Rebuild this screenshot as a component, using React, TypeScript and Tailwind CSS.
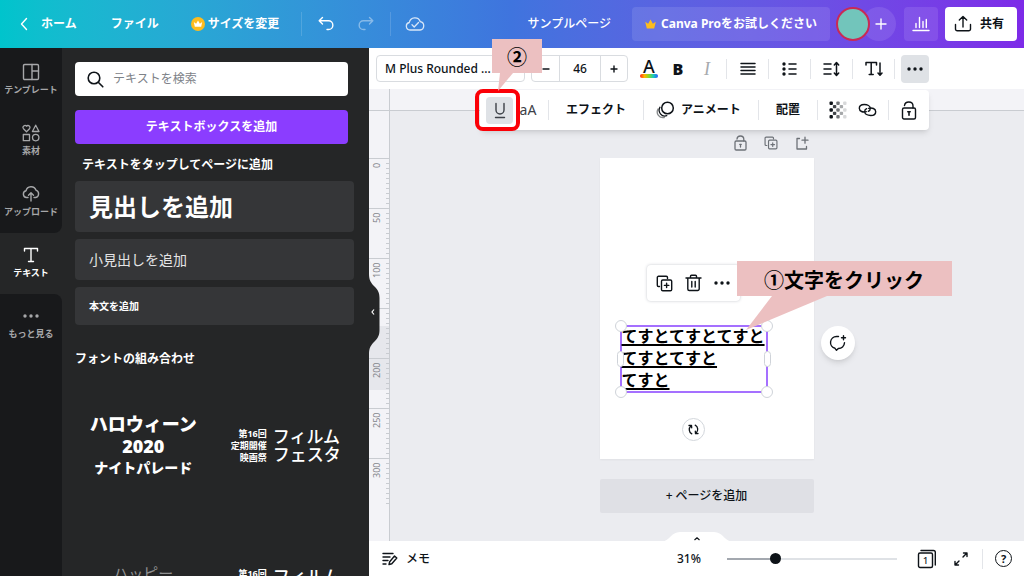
import type { ReactNode } from "react";

type GlyphProps = { w: number; h: number; sw?: number; className?: string; children: ReactNode };

function Glyph({ w, h, sw = 1.4, className = "", children }: GlyphProps) {
  return (
    <svg
      width={w}
      height={h}
      viewBox={`0 0 ${w} ${h}`}
      fill="none"
      stroke="currentColor"
      strokeWidth={sw}
      strokeLinecap="round"
      strokeLinejoin="round"
      aria-hidden="true"
      className={"shrink-0 " + className}
    >
      {children}
    </svg>
  );
}

function LockGlyph() {
  return (
    <Glyph w={16} h={19}>
      <rect x="1.500" y="7" width="13" height="11" rx="1.500" />
      <path d="M3.500 4.500C3.800 2.300 5.500 1 7.800 1c2.500 0 4.200 1.600 4.200 4v2" />
      <path d="M8 10.800v3.400M6.800 10.800h2.400" strokeWidth="1.600" />
    </Glyph>
  );
}

function SmallLockGlyph() {
  return (
    <Glyph w={13} h={16} sw={1.300}>
      <rect x="1" y="6" width="11" height="9" rx="1.200" />
      <path d="M3 4C3.200 2 4.600 1 6.400 1 8.500 1 9.800 2.400 9.800 4.300V6M6.500 9.300v2.700M5.700 9.300h1.600" />
    </Glyph>
  );
}

function CopyGlyph({ size = 17 }: { size?: number }) {
  return (
    <svg
      width={size}
      height={size}
      viewBox="0 0 17 17"
      fill="none"
      stroke="currentColor"
      strokeWidth="1.400"
      strokeLinecap="round"
      strokeLinejoin="round"
      aria-hidden="true"
    >
      <path d="M3.500 11.500h-1a1.200 1.200 0 0 1-1.200-1.200V2.500A1.200 1.200 0 0 1 2.500 1.300h7.800A1.200 1.200 0 0 1 11.500 2.500v1" />
      <rect x="5.500" y="5" width="10.200" height="10.700" rx="1.300" />
      <path d="M10.600 8.200v4.400M8.400 10.400h4.400" />
    </svg>
  );
}

function Dots({ size = 16 }: { size?: number }) {
  return (
    <svg width={size} height="4" viewBox="0 0 16 4" fill="currentColor" aria-hidden="true">
      <circle cx="2" cy="2" r="1.700" />
      <circle cx="8" cy="2" r="1.700" />
      <circle cx="14" cy="2" r="1.700" />
    </svg>
  );
}

function Divider() {
  return <span className="block h-5 w-px shrink-0 bg-[#e3e5e9]" />;
}

function Header() {
  return (
    <header className="flex h-12 shrink-0 items-center bg-linear-to-r from-[#00c4cc] via-[#3f74de] to-[#7d2ae8] pr-[7px] pl-5 text-xs font-bold whitespace-nowrap text-white">
      <a href="#home" className="flex items-center gap-[13px]">
        <Glyph w={8} h={14}>
          <path d="M6.500 1.500 1.500 7l5 5.500" />
        </Glyph>
        ホーム
      </a>
      <button type="button" className="ml-[34px]">ファイル</button>
      <button type="button" className="ml-8 flex items-center gap-[3px]">
        <svg width="14" height="14" viewBox="0 0 14 14" aria-hidden="true">
          <circle cx="7" cy="7" r="7" fill="#fdbc1e" />
          <path d="M3.800 9.800 2.800 5l2.300 1.700L7 3.400l1.900 3.300L11.200 5l-1 4.800z" fill="#fff" />
        </svg>
        サイズを変更
      </button>
      <span className="ml-[22px] h-6 w-px bg-white/15" />
      <button type="button" aria-label="元に戻す" className="ml-4">
        <Glyph w={16} h={16}>
          <path d="M4.500 1.500 1.200 4.800l3.300 3.300M1.500 4.800h9a4.300 4.300 0 0 1 0 8.700H9" />
        </Glyph>
      </button>
      <button type="button" aria-label="やり直す" className="ml-6 opacity-40">
        <Glyph w={16} h={16}>
          <path d="m11.500 1.500 3.300 3.300-3.300 3.300M14.500 4.800h-9a4.300 4.300 0 0 0 0 8.700H7" />
        </Glyph>
      </button>
      <span className="ml-4 h-6 w-px bg-white/15" />
      <Glyph w={20} h={16} sw={1.300} className="ml-[14px] opacity-80">
        <path d="M5 14a3.800 3.800 0 0 1-.7-7.500A5.700 5.700 0 0 1 15.300 5.700 4.200 4.200 0 0 1 15 14z" />
        <path d="m7 8.800 2.200 2.200 4.300-4.500" />
      </Glyph>
      <div className="ml-auto flex items-center">
        <span className="mr-[21px] font-medium">サンプルページ</span>
        <button type="button" className="flex h-[34px] w-[198px] items-center justify-center gap-[5px] rounded bg-white/10">
          <svg width="11" height="10" viewBox="0 0 11 10" fill="#fdbc1e" aria-hidden="true">
            <path d="M1.800 9.500.2 2.800l2.900 2L5.500.5l2.400 4.300 2.900-2-1.600 6.700z" />
          </svg>
          Canva Proをお試しください
        </button>
        <span className="z-10 ml-[6px] size-[34px] rounded-full border-2 border-[#c92a55] bg-[#72c5bb]" />
        <button type="button" aria-label="メンバーを追加" className="-ml-2 flex size-[34px] items-center justify-center rounded-full bg-white/10 pl-1">
          <Glyph w={12} h={12}>
            <path d="M6 1v10M1 6h10" />
          </Glyph>
        </button>
        <button type="button" aria-label="インサイト" className="ml-2 flex size-[34px] items-center justify-center rounded bg-white/10">
          <Glyph w={18} h={16}>
            <path d="M1 14.500h16M4 11.500v-4M7.500 11.500V1.500M11 11.500v-6M14.300 11.500v-8" />
          </Glyph>
        </button>
        <button type="button" className="ml-[7px] flex h-[34px] w-[72px] items-center justify-center gap-2 rounded bg-white pr-1 text-[#0e1318]">
          <Glyph w={18} h={18}>
            <path d="M9 12V1.800M5.300 5 9 1.500 12.700 5M1.500 9.500V14A1.800 1.800 0 0 0 3.300 15.800h11.400a1.800 1.800 0 0 0 1.800-1.800V9.500" />
          </Glyph>
          共有
        </button>
      </div>
    </header>
  );
}

const railItems: { label: string; icon: ReactNode }[] = [
  {
    label: "テンプレート",
    icon: (
      <Glyph w={18} h={18}>
        <rect x="1.500" y="1.500" width="15" height="15" rx="1.200" />
        <path d="M10 1.500v15M10 8h6.500" />
      </Glyph>
    ),
  },
  {
    label: "素材",
    icon: (
      <Glyph w={18} h={18} sw={1.300}>
        <path d="M4.500 7.700 1.500 4.700A1.900 1.900 0 0 1 4.500 2.200a1.900 1.900 0 0 1 3 2.500z" />
        <path d="M13.700 1.200 17 7.500h-6.600z" />
        <rect x="1.300" y="10.500" width="6.200" height="6.200" />
        <circle cx="13.700" cy="13.600" r="3.200" />
      </Glyph>
    ),
  },
  {
    label: "アップロード",
    icon: (
      <Glyph w={18} h={18}>
        <path d="M6 12.500H4.500a3.400 3.400 0 0 1-.5-6.700A5.200 5.200 0 0 1 14 5.200a3.800 3.800 0 0 1-.3 7.300H12M9 16V8M6.500 10.300 9 7.800l2.500 2.500" />
      </Glyph>
    ),
  },
  {
    label: "テキスト",
    icon: (
      <Glyph w={18} h={18}>
        <path d="M2.500 5V2.500h13V5M9 2.500v13M6.500 15.500h5" />
      </Glyph>
    ),
  },
  { label: "もっと見る", icon: <Dots /> },
];

const railShape = ["bg-[#18191b] pt-[2px]", "bg-[#18191b]", "rounded-br-lg bg-[#18191b]", "", "flex-1 rounded-tr-lg bg-[#18191b]"];

function Rail() {
  return (
    <nav className="w-[62px] shrink-0 bg-[#252627]">
      <ul className="flex h-full flex-col">
        {railItems.map((item, i) => (
          <li key={item.label} className={`${railShape[i]} ${i === 3 ? "text-white" : "text-[#a6a7a9]"}`}>
            <button type="button" className="flex h-[61px] w-full flex-col items-center pt-3 text-[9px] leading-4 font-bold whitespace-nowrap">
              <span className="flex h-5 items-center">{item.icon}</span>
              {item.label}
            </button>
          </li>
        ))}
      </ul>
    </nav>
  );
}

function FontPair() {
  return (
    <div className="flex items-center justify-center gap-[6px] whitespace-nowrap text-white">
      <div className="text-right text-[9px] leading-3 font-bold">
        <p>第16回</p>
        <p>定期開催</p>
        <p>映画祭</p>
      </div>
      <div className="text-[17px] leading-[18px] font-medium">
        <p>フィルム</p>
        <p>フェスタ</p>
      </div>
    </div>
  );
}

function TextPanel() {
  return (
    <aside className="relative w-[307px] shrink-0 bg-[#252627] text-white">
      <div className="flex h-full flex-col overflow-hidden pr-[15px] pl-[13px]">
        <div className="mt-[14px] mr-[6px] flex h-[34px] shrink-0 items-center gap-[9px] rounded bg-white px-3 text-[#0e1318]">
          <Glyph w={17} h={17} sw={1.600}>
            <circle cx="7" cy="7" r="5.800" />
            <path d="m11.500 11.500 4.300 4.300" />
          </Glyph>
          <input
            type="text"
            aria-label="テキストを検索"
            placeholder="テキストを検索"
            className="min-w-0 flex-1 bg-transparent text-xs outline-none placeholder:text-[#7d8288]"
          />
        </div>
        <button type="button" className="mt-[14px] mr-[6px] h-[34px] shrink-0 rounded bg-[#8b3dff] text-xs font-bold">
          テキストボックスを追加
        </button>
        <h2 className="mt-[13px] pl-[7px] text-xs leading-4 font-bold">テキストをタップしてページに追加</h2>
        <button type="button" className="mt-2 h-[51px] shrink-0 rounded bg-[#353638] pl-[14px] text-left text-2xl font-bold">
          見出しを追加
        </button>
        <button type="button" className="mt-[7px] h-[41px] shrink-0 rounded bg-[#353638] pl-[14px] text-left text-sm text-[#e4e4e5]">
          小見出しを追加
        </button>
        <button type="button" className="mt-[7px] h-[38px] shrink-0 rounded bg-[#353638] pl-[14px] text-left text-[10px] font-bold">
          本文を追加
        </button>
        <h2 className="mt-[26px] text-xs leading-4 font-bold">フォントの組み合わせ</h2>
        <div className="mt-2 grid grid-cols-2 gap-x-[6px]">
          <div className="flex h-[142px] flex-col items-center justify-center font-black whitespace-nowrap">
            <span className="text-lg leading-6">ハロウィーン</span>
            <span className="text-lg leading-5">2020</span>
            <span className="text-sm leading-6">ナイトパレード</span>
          </div>
          <div className="flex h-[142px] items-center justify-center">
            <FontPair />
          </div>
          <div className="mt-11 flex h-[142px] items-start justify-center text-[15px] leading-6 text-[#8f9091]">ハッピー</div>
          <div className="mt-[51px] flex h-[142px] items-start justify-center">
            <FontPair />
          </div>
        </div>
      </div>
      <button type="button" aria-label="パネルを閉じる" className="absolute top-[226px] left-full z-10 flex h-[80px] w-[11px] items-center">
        <svg width="11" height="80" viewBox="0 0 11 80" aria-hidden="true">
          <path d="M0 0c0 6 2 9 5.500 12.500S10.500 19 10.500 24v32c0 5-1.500 8-5 11.500S0 74 0 80z" fill="#252627" />
          <path d="m5 35.500-2 2.500 2 2.500" fill="none" stroke="#fff" strokeWidth="1.200" />
        </svg>
      </button>
    </aside>
  );
}

const cell = "flex h-7 shrink-0 items-center justify-center";

function FormatBar() {
  return (
    <div className="flex h-[41px] shrink-0 items-center bg-white pl-[7px] whitespace-nowrap text-[#0e1318]">
      <select
        aria-label="フォント"
        className="h-[27px] w-[149px] shrink-0 appearance-none rounded border border-[#d9dce0] bg-white px-2 text-xs font-medium"
      >
        <option>M Plus Rounded ...</option>
      </select>
      <div className="ml-[6px] flex h-[27px] w-[97px] shrink-0 items-center rounded border border-[#d9dce0] text-xs font-medium">
        <button type="button" aria-label="文字を小さく" className="flex h-full w-[27px] items-center justify-center">
          <Glyph w={8} h={8}>
            <path d="M1 4h6" />
          </Glyph>
        </button>
        <input
          type="text"
          aria-label="フォントサイズ"
          defaultValue="46"
          className="h-full min-w-0 flex-1 border-x border-[#d9dce0] text-center outline-none"
        />
        <button type="button" aria-label="文字を大きく" className="flex h-full w-[26px] items-center justify-center">
          <Glyph w={8} h={8}>
            <path d="M1 4h6M4 1v6" />
          </Glyph>
        </button>
      </div>
      <button type="button" aria-label="文字の色" className="ml-3 flex w-[18px] shrink-0 flex-col items-center">
        <span className="text-lg leading-[15px] font-medium">A</span>
        <span className="h-1 w-full rounded-full bg-[linear-gradient(to_right,#ff2a1a,#ffb400,#7fdc2b,#19c7c1,#2a5bff)]" />
      </button>
      <button type="button" className="ml-[10px] w-5 shrink-0 text-base font-black">B</button>
      <button type="button" className="ml-[9px] w-5 shrink-0 font-['Liberation_Serif',serif] text-lg text-[#a7aaae] italic">I</button>
      <span className="ml-[9px] flex shrink-0 items-center">
        <Divider />
        <button type="button" aria-label="文字揃え" className={`${cell} w-[41px]`}>
          <Glyph w={16} h={14} sw={1.500}>
            <path d="M1 1.500h14M1 5h14M1 8.500h14M1 12h14" />
          </Glyph>
        </button>
        <Divider />
        <button type="button" aria-label="箇条書き" className={`${cell} w-[41px]`}>
          <Glyph w={15} h={14} sw={1.500}>
            <path d="M7 2h7M7 7h7M7 12h7" />
            <path d="M2 2h.01M2 7h.01M2 12h.01" strokeWidth="3.400" />
          </Glyph>
        </button>
        <Divider />
        <button type="button" aria-label="行間隔" className={`${cell} w-[41px]`}>
          <Glyph w={17} h={16} sw={1.500}>
            <path d="M1 3h7M1 8h7M1 13h7M13.500 2v12M11.300 4l2.200-2.500L15.700 4M11.300 12l2.200 2.500 2.200-2.500" />
          </Glyph>
        </button>
        <Divider />
        <button type="button" aria-label="縦書き" className={`${cell} w-[41px]`}>
          <Glyph w={18} h={16} sw={1.500}>
            <path d="M1 4V1.500h10.500V4M6.200 1.500v12M4.200 13.500h4M15 2v12M13 12l2 2.300 2-2.300" />
          </Glyph>
        </button>
        <Divider />
      </span>
      <button type="button" aria-label="もっと見る" className={`${cell} ml-[6px] w-7 rounded bg-[#dfe2e6]`}>
        <Dots />
      </button>
    </div>
  );
}

const checkerCells = Array.from({ length: 25 }, (_, i) => ({ x: i % 5, y: Math.floor(i / 5) })).filter((c) => (c.x + c.y) % 2 === 0);

function MoreMenu() {
  return (
    <div className="absolute top-[42px] right-[95px] z-20 flex h-10 items-center rounded bg-white pr-3 pl-[6px] text-xs font-bold whitespace-nowrap text-[#0e1318] shadow-md">
      <div className="relative">
        <button type="button" aria-label="下線" className="flex size-[27px] items-center justify-center rounded bg-[#dfe2e6] text-[#3c4147]">
          <Glyph w={14} h={17}>
            <path d="M3 1.500V8a4 4 0 0 0 8 0V1.500M2.500 15.500h9" />
          </Glyph>
        </button>
        <span className="pointer-events-none absolute -top-2 -left-[11px] z-10 h-[42px] w-[45px] rounded-lg border-4 border-[#fb0007]" />
        <Callout2 />
      </div>
      <button type="button" className="ml-[5px] w-5 text-sm font-normal text-[#3c4147]">aA</button>
      <span className="ml-[10px]"><Divider /></span>
      <button type="button" className="w-[94px]">エフェクト</button>
      <Divider />
      <button type="button" className="flex w-[114px] items-center gap-[6px] pl-3">
        <Glyph w={19} h={18} sw={1.300}>
          <circle cx="11.500" cy="7" r="5.800" strokeWidth="1.500" />
          <path d="M4 6.200a5.800 5.800 0 0 0 6.800 8.500" />
          <path d="M2 8a5.800 5.800 0 0 0 6.300 8.500" opacity=".5" />
        </Glyph>
        アニメート
      </button>
      <Divider />
      <button type="button" className="w-[58px]">配置</button>
      <Divider />
      <button type="button" aria-label="透明度" className="ml-[11px]">
        <svg width="18" height="18" viewBox="0 0 18 18" aria-hidden="true">
          {checkerCells.map((c) => (
            <rect key={`${c.x}-${c.y}`} x={0.5 + c.x * 3.4} y={0.5 + c.y * 3.4} width="3.400" height="3.400" rx="1" fill="#0e1318" opacity={1 - c.x * 0.21} />
          ))}
        </svg>
      </button>
      <button type="button" aria-label="リンク" className="ml-[11px]">
        <Glyph w={19} h={14} sw={1.400}>
          <path d="M8.300 8.700C5 9.700 1.300 8.300 1.300 5.300c0-2.500 2.300-3.800 5-3.800 3 0 6 1.400 6 4 0 1.300-.8 2.300-2 2.800" />
          <path d="M10.700 5.300c3.300-1 7 .4 7 3.400 0 2.500-2.300 3.800-5 3.800-3 0-6-1.400-6-4 0-1.300.8-2.300 2-2.800" />
        </Glyph>
      </button>
      <span className="ml-[11px]"><Divider /></span>
      <button type="button" aria-label="ロック" className="ml-3">
        <LockGlyph />
      </button>
    </div>
  );
}

function Callout2() {
  return (
    <div className="absolute -top-[58px] left-[6px] z-20 w-[50px]">
      <p className="flex h-[34px] items-center justify-center bg-[#ecc0c1] pt-1 text-xl font-bold text-black">②</p>
      <svg width="24" height="18" viewBox="0 0 24 18" className="block" aria-hidden="true">
        <path d="M8 0h13L6 18z" fill="#ecc0c1" />
      </svg>
    </div>
  );
}

function Callout1() {
  return (
    <div className="absolute top-[103px] left-[137px] z-20 w-[215px]">
      <p className="flex h-[35px] items-center justify-center bg-[#ecc0c1] pt-1 text-xl font-bold whitespace-nowrap text-black">①文字をクリック</p>
      <svg width="92" height="35" viewBox="0 0 92 35" className="block" aria-hidden="true">
        <path d="M35 0h55L9 34z" fill="#ecc0c1" />
      </svg>
    </div>
  );
}

const rulerMarks = ["0", "50", "100", "", "200", "250", "300"];

function SideRuler() {
  return (
    <div className="relative w-[21px] shrink-0 overflow-hidden border-r border-[#c9ccd1] bg-[#f3f3f7] pt-[47px] text-[#83868b]">
      <span className="absolute top-[215px] left-0 h-[64px] w-full bg-[#e6e7ec]" />
      {rulerMarks.map((mark, i) => (
        <div key={i} className="relative flex h-[50px] justify-between border-t border-[#c9ccd1]">
          <span className="rotate-180 pb-1 text-right text-[9px] leading-4 [writing-mode:vertical-rl]">{mark}</span>
          <span className="w-[3px] bg-[repeating-linear-gradient(to_bottom,transparent_0_4px,#c9ccd1_4px_5px)]" />
        </div>
      ))}
    </div>
  );
}

const handles = [
  "-top-[7px] -left-[7px] size-3",
  "-top-[7px] -right-[7px] size-3",
  "-bottom-[7px] -left-[7px] size-3",
  "-bottom-[7px] -right-[7px] size-3",
  "top-6 -left-[5px] h-4 w-[7px]",
  "top-6 -right-[5px] h-4 w-[7px]",
];

function Page() {
  return (
    <div className="relative h-[301px] w-[214px] bg-white shadow-xs">
      <div className="absolute top-[107px] left-[47px] flex h-[36px] w-[93px] items-center gap-3 rounded bg-white pl-[9px] text-[#0e1318] shadow-[0_0_3px_rgba(60,70,90,0.300)]">
        <button type="button" aria-label="複製"><CopyGlyph /></button>
        <button type="button" aria-label="削除">
          <Glyph w={17} h={18}>
            <path d="M1 4h15M5.500 4V2.200a1 1 0 0 1 1-1h4a1 1 0 0 1 1 1V4M2.800 4v11a1.500 1.500 0 0 0 1.500 1.500h8.400a1.500 1.500 0 0 0 1.500-1.500V4M6.800 7.500v5.500M10.200 7.500v5.500" />
          </Glyph>
        </button>
        <button type="button" aria-label="その他"><Dots /></button>
      </div>
      <div className="absolute top-[167px] left-5 w-[148px] border-2 border-[#a570ff]">
        <p className="-mt-[2px] h-[66px] text-base leading-[22px] font-bold whitespace-nowrap text-black underline decoration-2 underline-offset-2">
          <span className="block">てすとてすとてすと</span>
          <span className="block">てすとてすと</span>
          <span className="block">てすと</span>
        </p>
        {handles.map((pos) => (
          <span key={pos} className={`absolute rounded-full border border-[#cfd3d9] bg-white ${pos}`} />
        ))}
      </div>
      <button type="button" aria-label="回転" className="absolute top-[260px] left-[82px] flex size-[23px] items-center justify-center rounded-full border border-[#d3d7dc] bg-white text-[#0e1318]">
        <Glyph w={13} h={13} sw={1.300}>
          <path d="M4.800 10.800A4.700 4.700 0 0 1 4 3M2 2.500l2.500-.2.200 2.500M8.200 2.200A4.700 4.700 0 0 1 9 10M11 10.500l-2.500.2-.2-2.500" />
        </Glyph>
      </button>
      <button type="button" aria-label="コメントを追加" className="absolute top-[168px] left-[221px] flex size-[34px] items-center justify-center rounded-full bg-white text-[#0e1318] shadow-md">
        <Glyph w={19} h={18}>
          <path d="M10.500 2.500H8.500a6 6 0 0 0-1.500 11.800l1.500 2 1.800-1.800a6 6 0 0 0 6.200-5.700M15.500 1.700v4M13.500 3.700h4" />
        </Glyph>
      </button>
      <Callout1 />
    </div>
  );
}

function Canvas() {
  return (
    <div className="flex min-h-0 flex-1 flex-col bg-[#ebecf0]">
      <div className="flex h-[22px] shrink-0 border-b border-[#c9ccd1] bg-[#f3f3f7]">
        <span className="w-[21px] border-r border-[#c9ccd1]" />
      </div>
      <div className="flex min-h-0 flex-1">
        <SideRuler />
        <div className="flex flex-1 flex-col items-center pr-px">
          <div className="mt-6 flex h-4 w-[214px] items-center justify-end gap-[17px] pr-[5px] text-[#6d7177]">
            <button type="button" aria-label="ページをロック"><SmallLockGlyph /></button>
            <button type="button" aria-label="ページを複製"><CopyGlyph size={14} /></button>
            <button type="button" aria-label="ページを追加">
              <Glyph w={14} h={15} sw={1.300}>
                <path d="M4.500 2.500H2V13h9.500v-2.500M10 1.200v6M7 4.200h6" />
              </Glyph>
            </button>
          </div>
          <div className="mt-[7px]">
            <Page />
          </div>
          <button type="button" className="mt-5 h-[34px] w-[214px] shrink-0 rounded-xs bg-[#dfe0e5] text-xs font-medium text-[#0e1318]">
            + ページを追加
          </button>
        </div>
      </div>
    </div>
  );
}

function StatusBar() {
  return (
    <footer className="relative flex h-[35px] shrink-0 items-center bg-white pr-3 pl-[13px] text-xs font-medium whitespace-nowrap text-[#0e1318]">
      <button type="button" aria-label="ページ一覧を開く" className="absolute -top-[9px] left-1/2 -translate-x-1/2">
        <svg width="70" height="12" viewBox="0 0 70 12" className="block" aria-hidden="true">
          <path d="M0 9.500C8 9 9 0 18 0h34c9 0 10 9 18 9.500V12H0z" fill="#fff" />
          <path d="m32.500 8 2.500-2.200L37.500 8" fill="none" stroke="#0e1318" strokeWidth="1.200" />
        </svg>
      </button>
      <button type="button" className="flex items-center gap-2">
        <Glyph w={16} h={14}>
          <path d="M1 1.500h10M1 5h7M1 8.500h5M1 12h3M7 12.500l.7-2.800L12.500 4l2.300 2-5 5.800z" />
        </Glyph>
        メモ
      </button>
      <div className="ml-auto flex items-center">
        <label htmlFor="zoom" className="w-[50px]">31%</label>
        <input
          id="zoom"
          type="range"
          min={0}
          max={100}
          defaultValue={27}
          className="h-3 w-[170px] appearance-none bg-[linear-gradient(to_right,#a3a8af_0_28%,#dfe2e6_28%_100%)] bg-[length:100%_2px] bg-center bg-no-repeat [&::-webkit-slider-thumb]:size-[11px] [&::-webkit-slider-thumb]:appearance-none [&::-webkit-slider-thumb]:rounded-full [&::-webkit-slider-thumb]:bg-[#0e1318]"
        />
        <button type="button" aria-label="グリッド表示" className="relative ml-5 h-5 w-5">
          <Glyph w={20} h={20}>
            <rect x="1.500" y="4" width="14" height="14.500" rx="1.500" />
            <path d="M4 1.500h12.500A1.800 1.800 0 0 1 18.300 3.300V16" />
          </Glyph>
          <span className="absolute top-1 left-0 w-[17px] text-[9px] leading-[15px]">1</span>
        </button>
        <button type="button" aria-label="全画面表示" className="ml-4">
          <Glyph w={16} h={16}>
            <path d="m10 6 3.700-3.700M10.500 2h3.500v3.500M6 10l-3.700 3.700M5.500 14H2v-3.500" />
          </Glyph>
        </button>
        <span className="ml-[13px]"><Divider /></span>
        <button type="button" aria-label="ヘルプ" className="ml-3 flex size-[17px] items-center justify-center rounded-full border border-[#0e1318] text-[11px] leading-none font-bold">
          ?
        </button>
      </div>
    </footer>
  );
}

export default function App() {
  return (
    <div className="flex h-screen flex-col overflow-hidden font-['Noto_Sans','Noto_Sans_CJK_JP',sans-serif]">
      <Header />
      <div className="flex min-h-0 flex-1">
        <Rail />
        <TextPanel />
        <main className="relative flex min-w-0 flex-1 flex-col">
          <FormatBar />
          <MoreMenu />
          <Canvas />
          <StatusBar />
        </main>
      </div>
    </div>
  );
}
